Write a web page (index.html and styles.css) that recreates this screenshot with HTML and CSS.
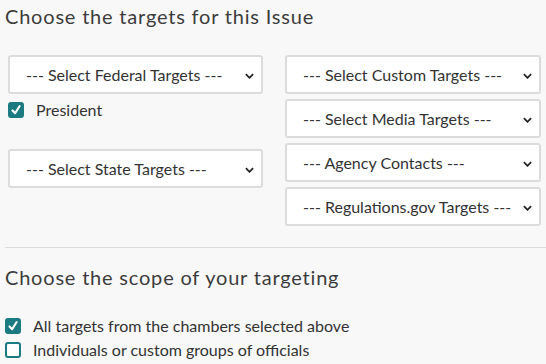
FILE: index.html
```html
<!DOCTYPE html>
<html>
<head>
<meta charset="utf-8">
<link rel="stylesheet" href="styles.css">
</head>
<body>
<div class="page">
  <h2 class="title">Choose the targets for this Issue</h2>
  <div class="targets">
    <div class="col">
      <div class="sel"><span>--- Select Federal Targets ---</span><svg class="chev" viewBox="0 0 10 6"><path d="M1 1l4 4 4-4" /></svg></div>
      <label class="check first"><span class="box on"><svg viewBox="0 0 16 16"><path d="M4 8.5l3 3.2L12.2 3.5" /></svg></span>President</label>
      <div class="sel state"><span>--- Select State Targets ---</span><svg class="chev" viewBox="0 0 10 6"><path d="M1 1l4 4 4-4" /></svg></div>
    </div>
    <div class="col">
      <div class="sel"><span>--- Select Custom Targets ---</span><svg class="chev" viewBox="0 0 10 6"><path d="M1 1l4 4 4-4" /></svg></div>
      <div class="sel"><span>--- Select Media Targets ---</span><svg class="chev" viewBox="0 0 10 6"><path d="M1 1l4 4 4-4" /></svg></div>
      <div class="sel"><span>--- Agency Contacts ---</span><svg class="chev" viewBox="0 0 10 6"><path d="M1 1l4 4 4-4" /></svg></div>
      <div class="sel"><span>--- Regulations.gov Targets ---</span><svg class="chev" viewBox="0 0 10 6"><path d="M1 1l4 4 4-4" /></svg></div>
    </div>
  </div>
  <hr class="rule">
  <h2 class="title scope">Choose the scope of your targeting</h2>
  <div class="scopes">
    <label class="check"><span class="box on"><svg viewBox="0 0 16 16"><path d="M4 8.5l3 3.2L12.2 3.5" /></svg></span>All targets from the chambers selected above</label>
    <label class="check"><span class="box"></span>Individuals or custom groups of officials</label>
  </div>
</div>
</body>
</html>
```
FILE: styles.css
```css
html, body {
  margin: 0;
  padding: 0;
  background: #f8f8f8;
}
body {
  font-family: Lato, "Noto Sans", sans-serif;
  color: #333;
  width: 546px;
  height: 364px;
  overflow: hidden;
}
.page {
  padding: 0 5px 0 5px;
}
.title {
  margin: 0;
  padding-top: 3px;
  font-size: 20px;
  font-weight: 400;
  letter-spacing: 0.8px;
  line-height: 26px;
  color: #3c3c3c;
}
.targets {
  display: grid;
  grid-template-columns: 255px 256px;
  column-gap: 22px;
  margin: 26px 0 0 3px;
}
.col {
  display: flex;
  flex-direction: column;
  gap: 5px;
}
.sel {
  position: relative;
  box-sizing: border-box;
  height: 39px;
  background: #fff;
  border: 2px solid #dcdcdc;
  border-radius: 3px;
  display: flex;
  align-items: center;
  padding: 0 0 0 16px;
  font-size: 16px;
  color: #333;
}
.chev {
  position: absolute;
  right: 7px;
  top: 16px;
  width: 9px;
  height: 6px;
  fill: none;
  stroke: #222;
  stroke-width: 2;
}
.check {
  display: flex;
  align-items: center;
  font-size: 16px;
  line-height: 20px;
  color: #333;
}
.check.first {
  margin-top: 1px;
}
.box {
  box-sizing: border-box;
  width: 16px;
  height: 16px;
  border: 2px solid #1b7b80;
  border-radius: 3px;
  background: #fff;
  margin-right: 12px;
  flex: none;
  display: flex;
}
.box.on {
  background: #1b7b80;
}
.box svg {
  width: 14px;
  height: 14px;
  margin: -1px;
  fill: none;
  stroke: #fff;
  stroke-width: 2.4;
  stroke-linecap: round;
  stroke-linejoin: round;
}
.sel.state {
  margin-top: 24px;
}
.rule {
  border: 0;
  border-top: 1px solid #dcdcdc;
  margin: 21px -5px 0 0;
}
.title.scope {
  margin-top: 13px;
}
.scopes {
  margin-top: 26px;
  display: flex;
  flex-direction: column;
  gap: 4px;
}
```
